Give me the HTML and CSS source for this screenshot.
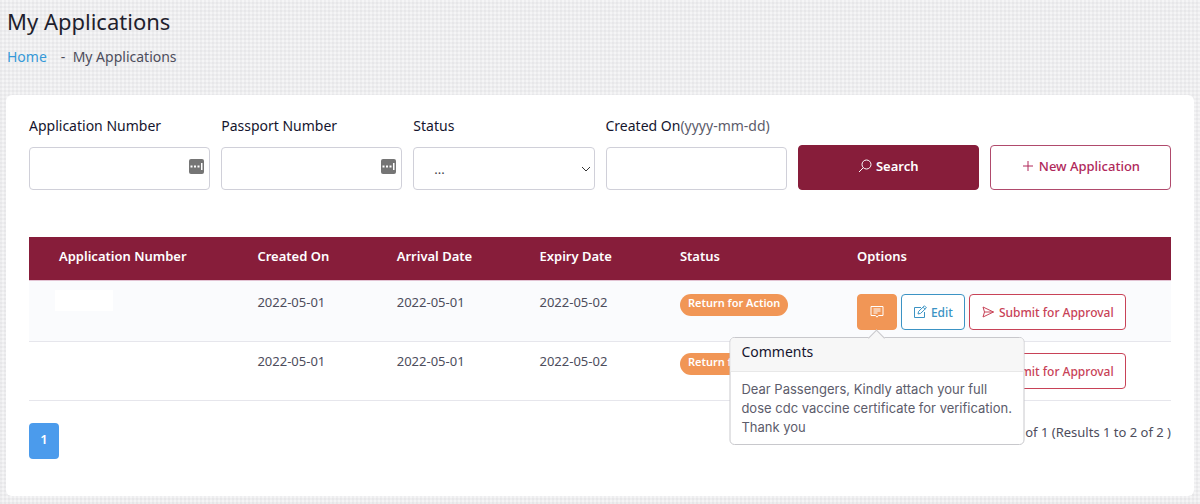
FILE: index.html
```html
<!DOCTYPE html>
<html lang="en">
<head>
  <meta charset="UTF-8">
  <meta name="viewport" content="width=device-width, initial-scale=1">
  <title>My Applications</title>
  <link rel="stylesheet" href="styles.css">
</head>
<body>
  <!-- Icons -->
  <svg class="sprite" aria-hidden="true">
    <symbol id="icon-comment" viewBox="0 0 14 14">
      <path d="M1 1.5h12v9H8.5L7 12.2 5.500 10.500H1z M3.500 4h7M3.500 6h7M3.500 8h4"/>
    </symbol>
    <symbol id="icon-edit" viewBox="0 0 14 14">
      <path d="M8 2.500H1.500v10h10V7M5 9l.6-2.600L11.400.8l2 2L7.600 8.400zM10 2.200l2 2"/>
    </symbol>
    <symbol id="icon-send" viewBox="0 0 14 14">
      <path d="M2 2l10.500 5L2 12l1.500-5zM3.500 7h9"/>
    </symbol>
    <symbol id="icon-dots" viewBox="0 0 15 15">
      <rect width="15" height="15" rx="2" fill="#757575" stroke="none"/>
      <path d="M1.500 6.500h2v2h-2zM5 6.500h2v2H5zM8.500 6.500h2v2h-2zM12 4h1.500v7H12z" fill="#fff" stroke="none"/>
    </symbol>
  </svg>

  <header class="page-header">
    <h1>My Applications</h1>
    <nav class="breadcrumb">
      <a href="#">Home</a>
      <span>-&nbsp; My Applications</span>
    </nav>
  </header>

  <main class="card">
    <!-- Search form -->
    <form class="filters">
      <div class="field">
        <label for="app-number">Application Number</label>
        <div class="control">
          <input type="text" id="app-number">
          <svg class="fill-icon"><use href="#icon-dots"/></svg>
        </div>
      </div>
      <div class="field">
        <label for="passport">Passport Number</label>
        <div class="control">
          <input type="text" id="passport">
          <svg class="fill-icon"><use href="#icon-dots"/></svg>
        </div>
      </div>
      <div class="field">
        <label for="status">Status</label>
        <div class="control">
          <select id="status">
            <option>...</option>
          </select>
          <svg class="chevron" viewBox="0 0 10 6"><path d="M1 1l4 4 4-4"/></svg>
        </div>
      </div>
      <div class="field">
        <label for="created">Created On<span class="hint">(yyyy-mm-dd)</span></label>
        <div class="control">
          <input type="text" id="created">
        </div>
      </div>
      <button type="submit" class="btn btn-search">
        <svg class="icon" viewBox="0 0 14 14"><circle cx="8.500" cy="5.500" r="4.500"/><path d="M5.300 8.700L1 13"/></svg>
        Search
      </button>
      <button type="button" class="btn btn-new">
        <svg class="icon" viewBox="0 0 14 14"><path d="M7 2v10M2 7h10"/></svg>
        New Application
      </button>
    </form>

    <!-- Applications list -->
    <table class="list">
      <thead>
        <tr>
          <th class="col-number">Application Number</th>
          <th class="col-created">Created On</th>
          <th class="col-arrival">Arrival Date</th>
          <th class="col-expiry">Expiry Date</th>
          <th class="col-status">Status</th>
          <th>Options</th>
        </tr>
      </thead>
      <tbody>
        <tr>
          <td><span class="blank"></span></td>
          <td>2022-05-01</td>
          <td>2022-05-01</td>
          <td>2022-05-02</td>
          <td><span class="badge">Return for Action</span></td>
          <td class="options">
            <div class="actions">
              <div class="comment">
                <button type="button" class="btn-sm btn-comment" aria-label="Comments">
                  <svg class="icon"><use href="#icon-comment"/></svg>
                </button>
                <div class="popover" role="tooltip">
                  <h3>Comments</h3>
                  <p>Dear Passengers, Kindly attach your full dose cdc vaccine certificate for verification. Thank you</p>
                </div>
              </div>
              <button type="button" class="btn-sm btn-edit"><svg class="icon"><use href="#icon-edit"/></svg>Edit</button>
              <button type="button" class="btn-sm btn-submit"><svg class="icon"><use href="#icon-send"/></svg>Submit for Approval</button>
            </div>
          </td>
        </tr>
        <tr>
          <td><span class="blank"></span></td>
          <td>2022-05-01</td>
          <td>2022-05-01</td>
          <td>2022-05-02</td>
          <td><span class="badge">Return for Action</span></td>
          <td class="options">
            <div class="actions">
              <button type="button" class="btn-sm btn-comment" aria-label="Comments">
                <svg class="icon"><use href="#icon-comment"/></svg>
              </button>
              <button type="button" class="btn-sm btn-edit"><svg class="icon"><use href="#icon-edit"/></svg>Edit</button>
              <button type="button" class="btn-sm btn-submit"><svg class="icon"><use href="#icon-send"/></svg>Submit for Approval</button>
            </div>
          </td>
        </tr>
      </tbody>
    </table>

    <footer class="pager">
      <button type="button" class="page">1</button>
      <span class="summary">1 of 1 (Results 1 to 2 of 2 )</span>
    </footer>
  </main>
</body>
</html>
```

FILE: styles.css
```css
* {
  margin: 0;
  padding: 0;
  box-sizing: border-box;
}
body {
  font-family: "Noto Sans", "Open Sans", sans-serif;
  font-size: 13px;
  color: #4d4d5c;
  padding: 8px 6px;
  /* fine woven texture */
  background-color: #f5f5f6;
  background-image:
    repeating-linear-gradient(0deg, rgba(120, 120, 130, 0.06) 0 2px, transparent 2px 4px),
    repeating-linear-gradient(90deg, rgba(120, 120, 130, 0.06) 0 2px, transparent 2px 4px);
}
button, input, select {
  font-family: inherit;
  font-size: 13px;
}
button {
  cursor: pointer;
}
svg {
  fill: none;
  stroke: currentColor;
}
.sprite {
  display: none;
}
.icon {
  width: 14px;
  height: 14px;
  flex: none;
}

/* Header */
.page-header {
  height: 87px;
  padding-left: 1px;
}
h1 {
  font-size: 22px;
  line-height: 26px;
  font-weight: 400;
  color: #1f1f2e;
}
.breadcrumb {
  display: flex;
  gap: 14px;
  margin-top: 13px;
  font-size: 14px;
  line-height: 20px;
}
.breadcrumb a {
  color: #3699d8;
  text-decoration: none;
}

/* Card */
.card {
  background: #fff;
  border-radius: 6px;
  padding: 21px 23px 37px;
}
.filters {
  display: grid;
  grid-template-columns: repeat(6, 1fr);
  gap: 11px;
  align-items: end;
}
.field label {
  display: block;
  margin-bottom: 11px;
  color: #15152e;
  font-size: 14px;
  line-height: 20px;
  white-space: nowrap;
}
.field .hint {
  color: #5c5c6b;
}
.control {
  position: relative;
}
.control input,
.control select {
  display: block;
  width: 100%;
  height: 43px;
  padding: 0 20px;
  border: 1px solid #d0d0d9;
  border-radius: 4px;
  background: #fff;
  color: #3f3f4d;
  appearance: none;
}
.fill-icon {
  position: absolute;
  top: 12px;
  right: 6px;
  width: 15px;
  height: 15px;
}
.chevron {
  position: absolute;
  top: 19px;
  right: 4px;
  width: 10px;
  height: 6px;
  color: #333;
}
.btn {
  display: flex;
  align-items: center;
  justify-content: center;
  gap: 4px;
  height: 45px;
  padding-bottom: 3px;
  border: 1px solid #871d3a;
  border-radius: 4px;
  font-weight: 500;
}
.btn-search {
  background: #871d3a;
  color: #fff;
  font-weight: 600;
}
.btn-new {
  background: #fff;
  border-color: #b04a6c;
  color: #b0285a;
}

/* List */
.list {
  width: 100%;
  margin-top: 47px;
  table-layout: fixed;
  border-collapse: separate;
  border-spacing: 0;
}
.list th {
  height: 44px;
  padding-bottom: 5px;
  border-bottom: 1px solid #e3c3d3;
  background: #871d3a;
  color: #fff;
  font-weight: 600;
  text-align: left;
}
.list td {
  height: 61px;
  padding-top: 11px;
  line-height: 20px;
  vertical-align: top;
  border-bottom: 1px solid #e6e6ec;
}
.list tbody tr:last-child td {
  height: 59px;
  padding-top: 9px;
}
.list th:first-child {
  padding-left: 30px;
}
.list td:first-child {
  padding: 9px 0 0 26px;
}
.list tbody tr:first-child {
  background: #fafbfd;
}
.list .options {
  padding-top: 13px;
}
.list tbody tr:last-child .options {
  padding-top: 11px;
}
.col-number { width: 20%; }
.col-created { width: 12.2%; }
.col-arrival { width: 12.5%; }
.col-expiry { width: 12.3%; }
.col-status { width: 15.5%; }
.blank {
  display: block;
  width: 58px;
  height: 21px;
  background: #fff;
}
.badge {
  display: inline-block;
  height: 22px;
  margin-top: 2px;
  padding: 0 8px;
  border-radius: 11px;
  background: #f19656;
  color: #fff;
  font-size: 11px;
  line-height: 18px;
  font-weight: 600;
  white-space: nowrap;
}
.actions {
  display: flex;
  gap: 4px;
}
.btn-sm {
  display: flex;
  align-items: center;
  gap: 4px;
  height: 36px;
  padding: 0 11px;
  border: 1px solid;
  border-radius: 4px;
  background: #fff;
  font-size: 12px;
  font-weight: 500;
  white-space: nowrap;
}
.btn-comment {
  width: 40px;
  padding: 0 12px;
  border-color: #f19656;
  background: #f19656;
  color: #fff;
}
.btn-edit {
  color: #3b93c4;
}
.btn-submit {
  color: #c84257;
}

/* Comment popover */
.comment {
  position: relative;
}
.popover {
  position: absolute;
  z-index: 2;
  top: 43px;
  left: 50%;
  width: 295px;
  transform: translateX(-50%);
  border: 1px solid #c8c8cc;
  border-radius: 5px;
  background: #fff;
}
.popover::before {
  content: "";
  position: absolute;
  top: -6px;
  left: 50%;
  width: 11px;
  height: 11px;
  margin-left: -6px;
  border: 1px solid #c8c8cc;
  border-right: 0;
  border-bottom: 0;
  background: #f7f7f7;
  transform: rotate(45deg);
}
.popover h3 {
  padding: 4px 11px 9px;
  border-bottom: 1px solid #e8e8e8;
  border-radius: 4px 4px 0 0;
  background: #f7f7f7;
  color: #15152e;
  font-size: 14px;
  font-weight: 400;
  line-height: 20px;
}
.popover p {
  padding: 8px 11px 7px;
  font-family: Inter, sans-serif;
  font-size: 13px;
  line-height: 19px;
  color: #5c5c6b;
}

/* Pager */
.pager {
  display: flex;
  justify-content: space-between;
  margin-top: 22px;
}
.page {
  width: 30px;
  height: 36px;
  padding-bottom: 4px;
  border: 0;
  border-radius: 4px;
  background: #4b9bec;
  color: #fff;
  font-weight: 600;
}
.summary {
  line-height: 18px;
}
```
